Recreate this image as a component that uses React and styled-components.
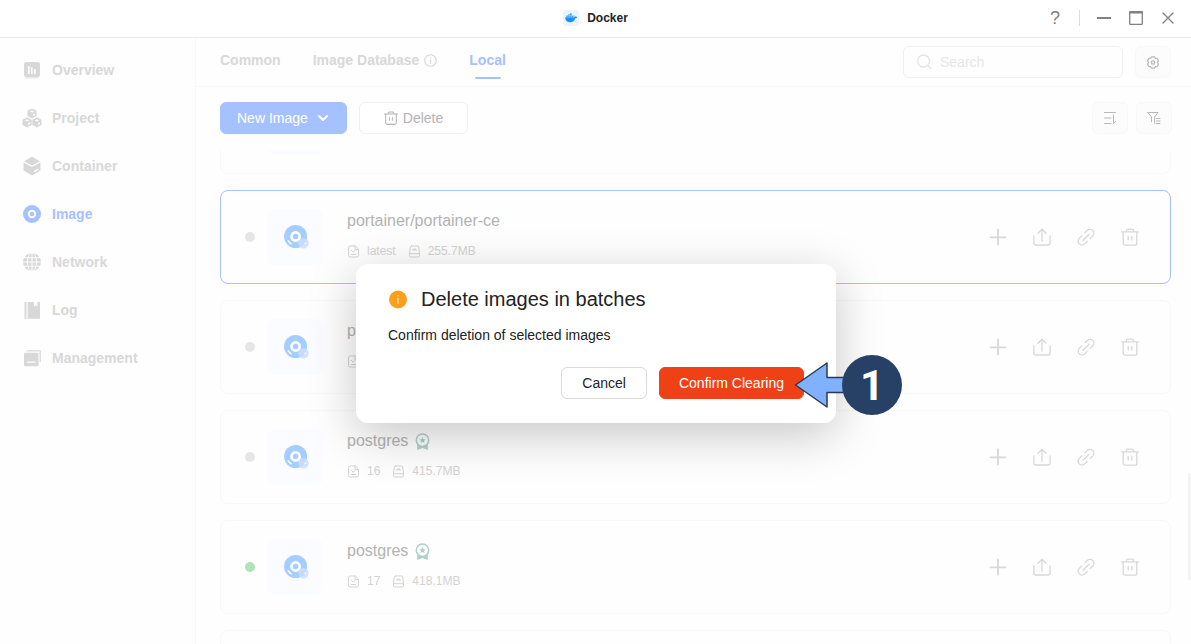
import React, { useLayoutEffect, useRef } from 'react';
import styled, { createGlobalStyle } from 'styled-components';

const GlobalStyle = createGlobalStyle`
    * {
        box-sizing: border-box;
    }
    body {
        margin: 0;
        background: #fefefe;
        font-family: 'Liberation Sans', Arial, sans-serif;
        font-size: 14px;
    }
    button, input {
        font-family: inherit;
        font-size: inherit;
    }
    button {
        cursor: pointer;
    }
    svg {
        display: block;
        flex: none;
    }
`

const Window = styled.div`
    height: 100vh;
    display: flex;
    flex-direction: column;
    overflow: hidden;
`

const TitleBar = styled.header`
    flex: none;
    height: 38px;
    display: grid;
    grid-template-columns: 1fr auto 1fr;
    align-items: center;
    padding-bottom: 2px;
    border-bottom: 1px solid #ececec;
    background: white;
`

const AppName = styled.h1`
    grid-column: 2;
    display: flex;
    align-items: center;
    gap: 8px;
    margin: 0;
    font-size: 12px;
    line-height: 16px;
    color: #222;
`

const WindowControls = styled.div`
    display: flex;
    justify-content: flex-end;
    align-items: center;
    gap: 8px;
    padding-right: 11px;
`

const WindowButton = styled.button`
    width: 24px;
    height: 24px;
    display: flex;
    align-items: center;
    justify-content: center;
    padding: 0;
    border: 0;
    background: none;
    color: #808080;
    font-size: 18px;
    line-height: 24px;
`

const Divider = styled.span`
    width: 1px;
    height: 16px;
    margin: 0 4px;
    background: #dcdcdc;
`

const Body = styled.div`
    position: relative;
    flex: 1;
    min-height: 0;
    display: flex;
`

const Sidebar = styled.nav`
    flex: none;
    width: 196px;
    padding: 8px 0;
    border-right: 1px solid #f8f8f8;
`

const NavLink = styled.a`
    height: 48px;
    display: flex;
    align-items: center;
    gap: 10px;
    padding-left: 22px;
    font-weight: bold;
    text-decoration: none;
    color: ${({ $active }) => ($active ? '#a6c1ff' : '#d8d8d8')};
`

const Main = styled.main`
    flex: 1;
    min-width: 0;
    display: flex;
    flex-direction: column;
`

const Header = styled.div`
    flex: none;
    height: 49px;
    display: flex;
    align-items: center;
    gap: 12px;
    padding: 0 20px 0 24px;
    border-bottom: 1px solid #f8f8f8;
`

const Tabs = styled.div`
    flex: 1;
    display: flex;
    gap: 32px;
`

const Tab = styled.button`
    position: relative;
    display: flex;
    align-items: center;
    gap: 5px;
    height: 44px;
    padding: 0 0 4px;
    border: 0;
    background: none;
    font-weight: bold;
    color: ${({ $active }) => ($active ? '#a6c1ff' : '#d8d8d8')};
    &::after {
        content: '';
        position: absolute;
        left: calc(50% - 13px);
        bottom: 5px;
        width: 26px;
        height: 2px;
        border-radius: 1px;
        background: ${({ $active }) => ($active ? '#a6c1ff' : 'transparent')};
    }
`

const SearchBox = styled.label`
    width: 220px;
    height: 32px;
    display: flex;
    align-items: center;
    gap: 8px;
    padding: 0 12px;
    border: 1px solid #f0f0f0;
    border-radius: 6px;
    color: #e4e4e4;
`

const SearchInput = styled.input`
    flex: 1;
    min-width: 0;
    padding: 0;
    border: 0;
    outline: 0;
    background: none;
    color: #b5b5b5;
    &::placeholder {
        color: #e6e6e6;
        opacity: 1;
    }
`

const SquareButton = styled.button`
    width: 36px;
    height: 32px;
    display: flex;
    align-items: center;
    justify-content: center;
    padding: 0;
    border: 1px solid #f8f8f8;
    border-radius: 6px;
    background: #fcfcfc;
    color: #b8b8b8;
`

const Toolbar = styled.div`
    flex: none;
    display: flex;
    gap: 12px;
    padding: 15px 19px 16px 24px;
`

const ToolbarRight = styled.div`
    display: flex;
    gap: 8px;
    margin-left: auto;
`

const Button = styled.button`
    height: 32px;
    display: flex;
    align-items: center;
    justify-content: center;
    gap: ${({ $gap }) => $gap || 0}px;
    padding: 0 ${({ $padding }) => $padding}px;
    border: 1px solid ${({ $border }) => $border};
    border-radius: 6px;
    background: ${({ $background }) => $background || 'white'};
    color: ${({ $color }) => $color};
`

const List = styled.ul`
    flex: 1;
    min-height: 0;
    display: flex;
    flex-direction: column;
    gap: 16px;
    margin: 0;
    padding: 0 20px 0 24px;
    list-style: none;
    overflow-y: auto;
    scrollbar-width: none;
`

const Card = styled.li`
    flex: none;
    height: 94px;
    display: flex;
    align-items: center;
    padding: 0 26px 0 24px;
    border: 1px solid ${({ $selected }) => ($selected ? '#a6c1ff' : '#f8f8f8')};
    border-radius: 8px;
`

const Status = styled.span`
    width: 10px;
    height: 10px;
    margin-right: 12px;
    border-radius: 50%;
    background: ${({ $running }) => ($running ? '#ade3b6' : '#e6e6e6')};
`

const Thumb = styled.div`
    width: 56px;
    height: 56px;
    display: flex;
    align-items: center;
    justify-content: center;
    margin-right: 24px;
    border-radius: 8px;
    background: #fbfcff;
`

const Info = styled.div`
    flex: 1;
    display: flex;
    flex-direction: column;
    gap: 8px;
`

const Name = styled.div`
    display: flex;
    align-items: center;
    gap: 6px;
    height: 20px;
    font-size: 16px;
    line-height: 20px;
    color: #b3b3b3;
`

const Meta = styled.div`
    display: flex;
    gap: 12px;
    font-size: 12px;
    line-height: 24px;
    color: #d3d3d3;
`

const MetaItem = styled.span`
    display: flex;
    align-items: center;
    gap: 7px;
`

const Actions = styled.div`
    display: flex;
    gap: 16px;
`

const ActionButton = styled.button`
    width: 28px;
    height: 28px;
    display: flex;
    align-items: center;
    justify-content: center;
    padding: 0;
    border: 0;
    background: none;
    color: #d8d8d8;
`

const ScrollThumb = styled.div`
    position: absolute;
    right: 0;
    bottom: 64px;
    width: 3px;
    height: 107px;
    border-radius: 2px 0 0 2px;
    background: #f3f3f3;
`

const Overlay = styled.div`
    position: absolute;
    inset: 0;
    display: flex;
    align-items: center;
    justify-content: center;
    padding: 5px 0 0 1px;
`

const Dialog = styled.section`
    position: relative;
    width: 480px;
    padding: 21px 32px 24px;
    border-radius: 12px;
    background: white;
    box-shadow: 0 12px 48px rgba(0, 0, 0, 0.22);
    color: #222;
`

const DialogTitle = styled.h2`
    display: flex;
    align-items: center;
    gap: 13px;
    margin: 0 0 12px;
    font-size: 20px;
    font-weight: normal;
    line-height: 28px;
`

const DialogText = styled.p`
    margin: 0 0 22px;
    line-height: 20px;
`

const DialogButtons = styled.div`
    display: flex;
    justify-content: flex-end;
    gap: 12px;
`

const Callout = styled.div`
    position: absolute;
    left: 438px;
    top: 91px;
    display: flex;
    align-items: center;
`

const CalloutNumber = styled.span`
    width: 60px;
    height: 60px;
    display: flex;
    align-items: center;
    justify-content: center;
    margin-left: -4px;
    border-radius: 50%;
    background: #264066;
    color: white;
    font: bold 42px Roboto, sans-serif;
`

const Icon = ({ size = 18, box = 18, children, ...rest }) => (
    <svg
        width={size}
        height={size}
        viewBox={`0 0 ${box} ${box}`}
        fill="none"
        stroke="currentColor"
        strokeWidth="1.3"
        strokeLinecap="round"
        strokeLinejoin="round"
        aria-hidden="true"
        {...rest}
    >
        {children}
    </svg>
)

const DockerIcon = () => (
    <Icon size={16} box={16} stroke="none">
        <rect width="16" height="16" rx="3.5" fill="#e9f4fe" />
        <path
            d="M2.1 7.3h9.200c.5-.5.5-1.400.1-2 .8.3 1.200.9 1.200 1.600.6-.1 1.200 0 1.600.3-.4.7-1 1-1.900 1-.8 2.700-2.500 4.100-5.300 4.100-2.900 0-4.600-1.600-4.900-5z"
            fill="#1d8ff0"
        />
        <path d="M3.200 5.500h1.700v1.500H3.200zM5.100 5.500h1.700v1.500H5.100zM7 5.500h1.700v1.500H7zM8.900 5.500h1.500v1.500H8.900zM7 3.300h1.700v2H7zM5.100 4.200h1.700v1.100H5.100z" fill="#4aa8f5" />
    </Icon>
)

const OverviewIcon = () => (
    <Icon size={20} box={20} stroke="none">
        <rect x="3" y="4" width="14" height="14.500" rx="2" fill="#e8e8e8" />
        <rect x="2" y="2" width="16" height="15" rx="2.500" fill="currentColor" />
        <path d="M6 6h1.600v8H6zM9 7.300h1.600V14H9zM12 9h1.600v5H12z" fill="white" />
    </Icon>
)

const Cube = ({ x, y }) => (
    <g transform={`translate(${x} ${y})`}>
        <path d="M0-5 4.600-2.600V2.600L0 5.100-4.600 2.600V-2.600z" fill="currentColor" stroke="none" />
        <path d="M-2.300-1.900 0-3 2.300-1.900 0-.8z" fill="#fefefe" stroke="none" />
        <path d="M1.100.9 3.100-.1V1.800L1.100 2.900z" fill="#fefefe" stroke="none" />
    </g>
)

const ProjectIcon = () => (
    <Icon size={20} box={20}>
        <Cube x={10} y={5.400} />
        <Cube x={5.100} y={14.300} />
        <Cube x={14.900} y={14.300} />
    </Icon>
)

const ContainerIcon = () => (
    <Icon size={20} box={20} stroke="none">
        <path d="M10 .8 18 5.200 10 9.600 2 5.200z" fill="currentColor" />
        <path d="M1.600 6.500 10 11l8.400-4.500v8L10 19.400 1.600 14.500z" fill="currentColor" />
        <path d="M12.500 15.400 16 13.300" stroke="white" strokeWidth="1.400" />
    </Icon>
)

const ImageIcon = () => (
    <Icon size={20} box={20}>
        <circle cx="10" cy="10" r="9" fill="currentColor" stroke="none" />
        <circle cx="10" cy="10" r="3.200" stroke="white" strokeWidth="2" />
    </Icon>
)

const NetworkIcon = () => (
    <Icon size={20} box={20}>
        <circle cx="10" cy="10" r="9" fill="currentColor" stroke="none" />
        <g stroke="#fefefe" strokeWidth="1">
            <path d="M1 10h18M2.500 5.800h15M2.500 14.200h15M10 1v18" />
            <ellipse cx="10" cy="10" rx="4.600" ry="9.200" />
        </g>
    </Icon>
)

const LogIcon = () => (
    <Icon size={20} box={20} stroke="none">
        <path d="M2.500 2h2v17h-2zM5.700 2H18v16.800H5.700zM12 2v4.500l1.700-1.200 1.700 1.200V2z" fill="currentColor" fillRule="evenodd" />
    </Icon>
)

const ManagementIcon = () => (
    <Icon size={20} box={20}>
        <path d="M4.500 2.800h13.700v11.500" strokeWidth="1.200" strokeLinecap="butt" />
        <rect x="2" y="4.700" width="14.500" height="13.500" rx="1" fill="currentColor" stroke="none" />
        <path d="M5.500 14.200h7.500" stroke="white" strokeWidth="1.200" />
    </Icon>
)

const InfoIcon = () => (
    <Icon size={13} box={14} strokeWidth="1.300">
        <circle cx="7" cy="7" r="6.200" />
        <path d="M7 6.200v4M7 3.800v.2" />
    </Icon>
)

const TrashIcon = ({ size = 18 }) => (
    <Icon size={size}>
        <path d="M.6 3.900h16.800M2.200 3.900v11.300a2 2 0 0 0 2 2h9.600a2 2 0 0 0 2-2V3.900M5.500 3.700V2.600A1.400 1.400 0 0 1 6.900 1.200h4.200a1.400 1.400 0 0 1 1.400 1.400v1.100M7.200 8.500v3.400M10.800 8.500v3.400" />
    </Icon>
)

const PlusIcon = () => (
    <Icon strokeWidth="1.800">
        <path d="M9 1.500v15M1.500 9.300h15" />
    </Icon>
)

const UploadIcon = () => (
    <Icon>
        <path d="M9 13.200V1.400M5 5.300l4-4 4 4M.9 8v7a2 2 0 0 0 2 2h12.200a2 2 0 0 0 2-2V8" />
    </Icon>
)

const LinkIcon = () => (
    <Icon>
        <path d="M6 12.300 12 6.300M7.800 4.900 10.200 2.500a3.850 3.850 0 0 1 5.500 5.500L13.300 10.400M4.700 8 2.300 10.400a3.850 3.850 0 0 0 5.500 5.500L10.200 13.500" />
    </Icon>
)

const DiscIcon = () => (
    <Icon size={28} box={28} stroke="none">
        <circle cx="14.600" cy="13.500" r="11.500" fill="#a5cdff" />
        <circle cx="14.600" cy="13.500" r="4.100" stroke="white" strokeWidth="2.600" />
        <path d="M7.200 17.900a9 9 0 0 0 3 2.900" stroke="white" strokeWidth="1.500" />
        <circle cx="22.500" cy="20.300" r="5.200" fill="#cbddff" fillOpacity="0.850" />
        <circle cx="24.200" cy="20.200" r="0.800" fill="white" />
    </Icon>
)

const BadgeIcon = () => (
    <Icon size={17} box={17} stroke="#b0d0cb" strokeWidth="1.500">
        <path d="M3.200 11v6l5.300-1.900 5.300 1.900V11z" fill="#b0d0cb" stroke="none" />
        <circle cx="8.500" cy="7.200" r="6.200" fill="#fefefe" />
        <path d="m8.500 4.100.95 2 2.150.3-1.600 1.500.4 2.200-1.900-1.050-1.900 1.050.4-2.200-1.600-1.500 2.150-.3z" fill="#b0d0cb" stroke="none" />
    </Icon>
)

const TagIcon = () => (
    <Icon size={13} box={13} strokeWidth="1">
        <path d="M8 1H3.200A1.700 1.700 0 0 0 1.500 2.700v7.600A1.700 1.700 0 0 0 3.200 12h6.600a1.700 1.700 0 0 0 1.700-1.700V4.500zM8 1v3.500h3.500M4.300 5.300 6.200 7.200 8.300 5.300M4.300 9.500h4.400" />
    </Icon>
)

const DiskIcon = () => (
    <Icon size={13} box={13} strokeWidth="1">
        <path d="M3.400 1h6.200a1 1 0 0 1 1 .8l.9 6.400v2.500a1.300 1.300 0 0 1-1.300 1.300H2.800a1.300 1.300 0 0 1-1.300-1.300V8.200l.9-6.400a1 1 0 0 1 1-.8zM1.500 8.700h10" />
        <path d="M4.700 4.600c.8-.9 2.800-.9 3.600 0z" fill="currentColor" />
    </Icon>
)

const navItems = [
    { label: 'Overview', icon: <OverviewIcon /> },
    { label: 'Project', icon: <ProjectIcon /> },
    { label: 'Container', icon: <ContainerIcon /> },
    { label: 'Image', icon: <ImageIcon />, active: true },
    { label: 'Network', icon: <NetworkIcon /> },
    { label: 'Log', icon: <LogIcon /> },
    { label: 'Management', icon: <ManagementIcon /> },
]

const images = [
    {},
    { name: 'portainer/portainer-ce', tag: 'latest', size: '255.7MB', selected: true },
    { name: 'php', tag: '8' },
    { name: 'postgres', tag: '16', size: '415.7MB', official: true },
    { name: 'postgres', tag: '17', size: '418.1MB', official: true, running: true },
    {},
]

const ImageCard = ({ image }) => (
    <Card $selected={image.selected}>
        <Status $running={image.running} />
        <Thumb><DiscIcon /></Thumb>
        <Info>
            <Name>
                {image.name}
                {image.official && <BadgeIcon />}
            </Name>
            <Meta>
                <MetaItem><TagIcon />{image.tag}</MetaItem>
                <MetaItem><DiskIcon />{image.size}</MetaItem>
            </Meta>
        </Info>
        <Actions>
            <ActionButton aria-label="Create container"><PlusIcon /></ActionButton>
            <ActionButton aria-label="Export"><UploadIcon /></ActionButton>
            <ActionButton aria-label="Copy link"><LinkIcon /></ActionButton>
            <ActionButton aria-label="Delete image"><TrashIcon /></ActionButton>
        </Actions>
    </Card>
)

const ImageList = () => {
    const list = useRef(null);

    useLayoutEffect(() => {
        list.current.scrollTop = 70;
    }, []);

    return (
        <List ref={list}>
            {images.map((image, i) => <ImageCard key={i} image={image} />)}
        </List>
    );
}

const DeleteDialog = () => (
    <Overlay>
        <Dialog role="dialog" aria-labelledby="dialog-title">
            <DialogTitle id="dialog-title">
                <Icon size={20} box={20} stroke="none">
                    <circle cx="10" cy="10.500" r="9" fill="#fc9f1c" />
                    <path d="M9.400 9h1.200v6H9.400zM9.300 5.900h1.400v1.400H9.300z" fill="#ffe6c2" />
                </Icon>
                Delete images in batches
            </DialogTitle>
            <DialogText>Confirm deletion of selected images</DialogText>
            <DialogButtons>
                <Button $padding={20} $border="#d9d9d9" $color="#222">Cancel</Button>
                <Button $padding={19} $border="#ef4016" $background="#ef4016" $color="white">
                    Confirm Clearing
                </Button>
            </DialogButtons>
            <Callout>
                <svg width="52" height="48" viewBox="0 0 52 48" aria-hidden="true">
                    <path
                        d="M1.500 24 33 2v14.500h20v15H33V46z"
                        fill="#80b1ff"
                        stroke="#2b3a50"
                        strokeWidth="1.500"
                        strokeLinejoin="round"
                    />
                </svg>
                <CalloutNumber>1</CalloutNumber>
            </Callout>
        </Dialog>
    </Overlay>
)

export default function App() {
    return (
        <Window>
            <GlobalStyle />
            <TitleBar>
                <AppName><DockerIcon />Docker</AppName>
                <WindowControls>
                    <WindowButton>?</WindowButton>
                    <Divider />
                    <WindowButton aria-label="Minimize">
                        <Icon size={14} box={14} strokeWidth="2" strokeLinecap="butt"><path d="M0 7h14" /></Icon>
                    </WindowButton>
                    <WindowButton aria-label="Maximize">
                        <Icon size={14} box={14} strokeLinecap="butt">
                            <rect x=".7" y=".7" width="12.600" height="12.600" rx=".5" />
                            <path d="M0 1.500h14" strokeWidth="2" />
                        </Icon>
                    </WindowButton>
                    <WindowButton aria-label="Close">
                        <Icon size={12} box={12}><path d="m1 1 10 10M11 1 1 11" /></Icon>
                    </WindowButton>
                </WindowControls>
            </TitleBar>
            <Body>
                <Sidebar>
                    {navItems.map(item => (
                        <NavLink key={item.label} href="#" $active={item.active}>
                            {item.icon}
                            {item.label}
                        </NavLink>
                    ))}
                </Sidebar>
                <Main>
                    <Header>
                        <Tabs>
                            <Tab>Common</Tab>
                            <Tab>Image Database <InfoIcon /></Tab>
                            <Tab $active>Local</Tab>
                        </Tabs>
                        <SearchBox>
                            <Icon size={16} box={16}>
                                <circle cx="7.500" cy="7" r="6" />
                                <path d="m11.900 11.400 3.200 3.300" />
                            </Icon>
                            <SearchInput type="text" placeholder="Search" aria-label="Search" />
                        </SearchBox>
                        <SquareButton aria-label="Settings">
                            <Icon size={14} box={14} strokeWidth="1.200">
                                <path d="M5.500 1.800h3l.8 1.500 1.700.1 1.400 2.500-.9 1.600.9 1.600L11 11.600l-1.700.1-.8 1.500h-3l-.8-1.500-1.700-.1L1.600 9.100l.9-1.600-.9-1.600L3 3.400l1.700-.1z" />
                                <circle cx="7" cy="7.500" r="1.700" />
                            </Icon>
                        </SquareButton>
                    </Header>
                    <Toolbar>
                        <Button $padding={16} $gap={8} $border="#a6c1ff" $background="#a6c1ff" $color="white">
                            New Image
                            <Icon size={14} box={14} strokeWidth="2"><path d="m3 5 4 4 4-4" /></Icon>
                        </Button>
                        <Button $padding={24} $gap={5} $border="#f0f0f0" $color="#b3b3b3">
                            <TrashIcon size={14} />
                            Delete
                        </Button>
                        <ToolbarRight>
                            <SquareButton aria-label="Sort">
                                <Icon size={14} box={14} strokeWidth="1"><path d="M1.500 1.500h11M1.500 7h6.500M1.500 12.500h6.500M10.500 4v8.500l2.200-2" /></Icon>
                            </SquareButton>
                            <SquareButton aria-label="Filter">
                                <Icon size={14} box={14} strokeWidth="1"><path d="M1 1.500h10L7.700 6v6.500M4.500 10.800V6L1 1.500M9.500 7.500h3.500M9.500 10h3.500M9.500 12.500h3.500" /></Icon>
                            </SquareButton>
                        </ToolbarRight>
                    </Toolbar>
                    <ImageList />
                </Main>
                <ScrollThumb />
                <DeleteDialog />
            </Body>
        </Window>
    );
}
